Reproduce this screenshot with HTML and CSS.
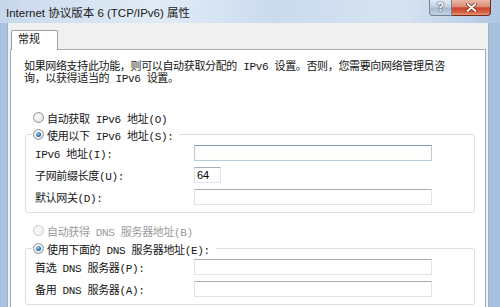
FILE: index.html
```html
<!DOCTYPE html>
<html lang="zh-CN">
<head>
  <meta charset="UTF-8">
  <title>Internet 协议版本 6 (TCP/IPv6) 属性</title>
  <link rel="stylesheet" href="styles.css">
</head>
<body>
  <div class="window">
    <div class="titlebar">
      <span class="title">Internet 协议版本 6 (TCP/IPv6) 属性</span>
      <div class="caption-buttons">
        <span class="btn-help">?</span>
        <span class="btn-close">
          <svg width="11" height="9" viewBox="0 0 11 9">
            <path d="M1.5 1 L9.5 8 M9.5 1 L1.5 8" stroke="#7a2a1c" stroke-width="3.4" stroke-linecap="round"/>
            <path d="M1.5 1 L9.5 8 M9.5 1 L1.5 8" stroke="#fff" stroke-width="1.8" stroke-linecap="round"/>
          </svg>
        </span>
      </div>
    </div>

    <div class="frame">
      <div class="client">
        <div class="tabs">
          <span class="tab">常规</span>
        </div>
        <div class="panel">
          <p class="intro">如果网络支持此功能，则可以自动获取分配的 IPv6 设置。否则，您需要向网络管理员咨<br>询，以获得适当的 IPv6 设置。</p>

          <label class="option first"><span class="radio"></span>自动获取 IPv6 地址(O)</label>
          <fieldset class="group">
            <legend class="option"><span class="radio on"></span>使用以下 IPv6 地址(S):</legend>
            <div class="fields">
              <label>IPv6 地址(I):</label><input type="text" class="focus">
              <label>子网前缀长度(U):</label><input type="text" class="short" value="64">
              <label>默认网关(D):</label><input type="text">
            </div>
          </fieldset>

          <label class="option disabled second"><span class="radio"></span>自动获得 DNS 服务器地址(B)</label>
          <fieldset class="group">
            <legend class="option"><span class="radio on"></span>使用下面的 DNS 服务器地址(E):</legend>
            <div class="fields">
              <label>首选 DNS 服务器(P):</label><input type="text">
              <label>备用 DNS 服务器(A):</label><input type="text">
            </div>
          </fieldset>
        </div>
      </div>
    </div>
  </div>
</body>
</html>
```

FILE: styles.css
```css
body {
  margin: 0;
  font-family: "Liberation Mono", "Noto Sans CJK SC", monospace;
  font-size: 11px;
  color: #151515;
}

.window {
  width: 500px;
  height: 307px;
  overflow: hidden;
  display: flex;
  flex-direction: column;
  background: linear-gradient(90deg, #a9c2e0, #c6d9ee 35%, #bcd1e9 70%, #a6c0de);
}

.titlebar {
  height: 23px;
  flex: none;
  display: flex;
  justify-content: space-between;
  align-items: flex-start;
  padding: 0 9px 0 6px;
  background: linear-gradient(100deg, rgba(255,255,255,0.35), rgba(255,255,255,0.5) 30%, rgba(255,255,255,0.15) 55%, rgba(255,255,255,0.45) 80%, rgba(255,255,255,0.1));
}

.title {
  align-self: center;
  padding-top: 1px;
  font-family: "Liberation Sans", "Noto Sans CJK SC", sans-serif;
  font-size: 11.5px;
  color: #1a1a1a;
}

.caption-buttons {
  display: flex;
}

.btn-help {
  width: 23px;
  height: 16px;
  box-sizing: border-box;
  border: 1px solid #71839a;
  border-top: none;
  border-radius: 0 0 0 4px;
  background: linear-gradient(#e2eaf4, #c2cfdf 48%, #a7b8cd 52%, #c4d2e2);
  color: #fff;
  font: bold 12px "Liberation Sans", sans-serif;
  line-height: 15px;
  text-align: center;
  text-shadow: 0 0 2px #2e4058, 0 0 1px #2e4058;
}

.btn-close {
  width: 39px;
  height: 16px;
  box-sizing: border-box;
  border: 1px solid #6e2c21;
  border-top: none;
  border-left: none;
  border-radius: 0 0 4px 0;
  background: linear-gradient(#ecb8a8, #db8a76 45%, #c8472f 52%, #d45c3d 80%, #e79e7a);
  display: flex;
  align-items: center;
  justify-content: center;
}

.frame {
  flex: 1;
  display: flex;
  padding: 0 11px 0 7px;
}

.client {
  flex: 1;
  display: flex;
  flex-direction: column;
  background: #f0f0f0;
  border-left: 1px solid #a3afbd;
  border-right: 1px solid #a3afbd;
  padding: 7px 2px 0;
}

.tabs {
  height: 19px;
  display: flex;
  padding-left: 1px;
}

.tab {
  position: relative;
  z-index: 1;
  height: 20px;
  width: 47px;
  box-sizing: border-box;
  border: 1px solid #9aa0a8;
  border-bottom: none;
  border-radius: 2px 2px 0 0;
  background: #fff;
  padding-left: 6px;
  line-height: 19px;
}

.panel {
  flex: 1;
  background: #fff;
  border: 1px solid #a9aeb4;
  border-bottom: none;
  padding: 11px 10px 0 13px;
  letter-spacing: -0.35px;
}

.intro {
  margin: 0;
  line-height: 12px;
  white-space: nowrap;
}

.option {
  display: flex;
  align-items: center;
  gap: 3px;
  height: 13px;
}

.option.first {
  margin: 26px 0 0 9px;
}

.option.second {
  margin: 11px 0 0 9px;
}

.option.disabled {
  color: #9a9a9a;
}

.radio {
  width: 11px;
  height: 11px;
  box-sizing: border-box;
  border-radius: 50%;
  border: 1px solid #8f9296;
  background: radial-gradient(circle at 40% 35%, #ffffff, #dcdcdc);
  display: flex;
  align-items: center;
  justify-content: center;
}

.disabled .radio {
  border-color: #cacaca;
  background: #f4f4f4;
}

.radio.on::after {
  content: "";
  width: 5px;
  height: 5px;
  border-radius: 50%;
  background: radial-gradient(circle at 40% 35%, #9ad3f5, #2a6fb8 60%, #1a4f8e);
}

.group {
  margin: 4px 0 0 1px;
  padding: 4px 10px 7px 9px;
  border: 1px solid #d5dfe5;
  border-radius: 3px;
}

.group + .option {
  margin-top: 11px;
}

.option + .group:last-child {
  margin-top: 5px;
}

.group legend {
  margin-left: -3px;
  padding: 0 6px 0 1px;
}

.fields {
  display: grid;
  grid-template-columns: 159px 238px;
  row-gap: 6px;
  align-items: center;
}

.fields input {
  width: 238px;
  height: 16px;
  box-sizing: border-box;
  margin: 0;
  padding: 0 2px;
  border: 1px solid #e2e3ea;
  border-top-color: #abadb3;
  background: #fff;
  font-family: "Liberation Sans", sans-serif;
  font-size: 11px;
  color: #000;
}

.fields input.focus {
  border-color: #b9ccd8;
  border-top-color: #7f9cb2;
  background: #fdfefb;
}

.fields input.short {
  width: 27px;
}
```
